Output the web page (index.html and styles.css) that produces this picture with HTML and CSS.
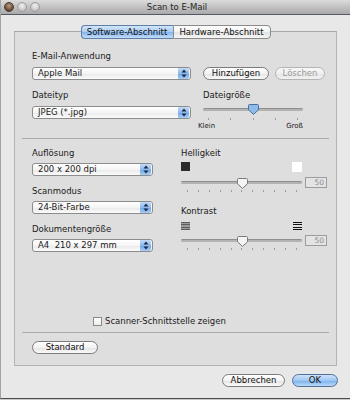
FILE: index.html
```html
<!DOCTYPE html>
<html lang="de">
<head>
    <meta charset="UTF-8">
    <meta name="viewport" content="width=device-width, initial-scale=1.0">
    <title>Scan to E-Mail</title>
    <link rel="stylesheet" href="styles.css">
</head>
<body>
    <div class="window">
        <div class="titlebar">
            <div class="lights">
                <span class="light close"></span>
                <span class="light"></span>
                <span class="light"></span>
            </div>
            <div class="title">Scan to E-Mail</div>
        </div>

        <div class="content">
            <div class="tabs">
                <span class="tab active">Software-Abschnitt</span>
                <span class="tab">Hardware-Abschnitt</span>
            </div>

            <div class="group">
                <!-- application and file type -->
                <div class="section top">
                    <div class="col col-app">
                        <div class="label">E-Mail-Anwendung</div>
                        <div class="popup">Apple Mail<span class="arrows"><svg width="6" height="9" viewBox="0 0 6 9"><path d="M3 0.5L5.5 3.5H0.5Z M3 8.5L5.5 5.5H0.5Z" fill="#1c2a40"/></svg></span></div>
                        <div class="label gap">Dateityp</div>
                        <div class="popup">JPEG (*.jpg)<span class="arrows"><svg width="6" height="9" viewBox="0 0 6 9"><path d="M3 0.5L5.5 3.5H0.5Z M3 8.5L5.5 5.5H0.5Z" fill="#1c2a40"/></svg></span></div>
                    </div>
                    <div class="col col-size">
                        <div class="btn-row">
                            <button class="btn add">Hinzufügen</button>
                            <button class="btn del" disabled>Löschen</button>
                        </div>
                        <div class="label gap">Dateigröße</div>
                        <div class="slider size">
                            <div class="track"></div>
                            <svg class="thumb" style="left: 45px" width="11" height="11" viewBox="0 0 11 11"><path d="M1.5 0.5h8a1 1 0 0 1 1 1v4.3l-5 4.6l-5-4.6v-4.3a1 1 0 0 1 1-1z" fill="#8fbbec" stroke="#4a6f9c"/></svg>
                        </div>
                        <div class="ticks five"><i></i><i></i><i></i><i></i><i></i></div>
                        <div class="scale"><span>Klein</span><span>Groß</span></div>
                    </div>
                </div>

                <div class="sep"></div>

                <!-- scan settings -->
                <div class="section middle">
                    <div class="col col-scan">
                        <div class="label">Auflösung</div>
                        <div class="popup">200 x 200 dpi<span class="arrows"><svg width="6" height="9" viewBox="0 0 6 9"><path d="M3 0.5L5.5 3.5H0.5Z M3 8.5L5.5 5.5H0.5Z" fill="#1c2a40"/></svg></span></div>
                        <div class="label gap">Scanmodus</div>
                        <div class="popup">24-Bit-Farbe<span class="arrows"><svg width="6" height="9" viewBox="0 0 6 9"><path d="M3 0.5L5.5 3.5H0.5Z M3 8.5L5.5 5.5H0.5Z" fill="#1c2a40"/></svg></span></div>
                        <div class="label gap">Dokumentengröße</div>
                        <div class="popup">A4&nbsp; 210 x 297 mm<span class="arrows"><svg width="6" height="9" viewBox="0 0 6 9"><path d="M3 0.5L5.5 3.5H0.5Z M3 8.5L5.5 5.5H0.5Z" fill="#1c2a40"/></svg></span></div>
                    </div>
                    <div class="col col-adjust">
                        <div class="label">Helligkeit</div>
                        <div class="icons">
                            <span class="sq dark"></span>
                            <span class="sq light-sq"></span>
                        </div>
                        <div class="slider-row">
                            <div class="slider wide">
                                <div class="track"></div>
                                <svg class="thumb" style="left: 56px" width="11" height="11" viewBox="0 0 11 11"><path d="M1.5 0.5h8a1 1 0 0 1 1 1v4.3l-5 4.6l-5-4.6v-4.3a1 1 0 0 1 1-1z" fill="#f4f4f4" stroke="#7a7a7a"/></svg>
                            </div>
                            <div class="value">50</div>
                        </div>
                        <div class="ticks eleven"><i></i><i></i><i></i><i></i><i></i><i></i><i></i><i></i><i></i><i></i><i></i></div>

                        <div class="label contrast">Kontrast</div>
                        <div class="icons">
                            <span class="stripes soft"><i></i><i></i><i></i><i></i></span>
                            <span class="stripes hard"><i></i><i></i><i></i><i></i></span>
                        </div>
                        <div class="slider-row">
                            <div class="slider wide">
                                <div class="track"></div>
                                <svg class="thumb" style="left: 56px" width="11" height="11" viewBox="0 0 11 11"><path d="M1.5 0.5h8a1 1 0 0 1 1 1v4.3l-5 4.6l-5-4.6v-4.3a1 1 0 0 1 1-1z" fill="#f4f4f4" stroke="#7a7a7a"/></svg>
                            </div>
                            <div class="value">50</div>
                        </div>
                        <div class="ticks eleven"><i></i><i></i><i></i><i></i><i></i><i></i><i></i><i></i><i></i><i></i><i></i></div>
                    </div>
                </div>

                <label class="check">
                    <span class="box"></span>
                    Scanner-Schnittstelle zeigen
                </label>

                <div class="sep bottom"></div>

                <button class="btn standard">Standard</button>
            </div>

            <div class="actions">
                <button class="btn cancel">Abbrechen</button>
                <button class="btn ok">OK</button>
            </div>
        </div>
    </div>
</body>
</html>
```

FILE: styles.css
```css
body {
    margin: 0;
    font-family: "DejaVu Sans", "Noto Sans", sans-serif;
    font-size: 8.5px;
    color: #1a1a1a;
    background: #c9c9c9;
}
.window {
    width: 350px;
    height: 399px;
    box-sizing: border-box;
    background: #e8e8e8;
    border-left: 1px solid #a4a4a4;
    border-bottom: 1px solid #4c4c4c;
}

/* title bar */
.titlebar {
    height: 14px;
    border-bottom: 1px solid #535a66;
    background: linear-gradient(#dcdcdc, #c4c4c4 45%, #a9a9a9);
    display: flex;
    align-items: center;
}
.lights {
    display: flex;
    gap: 3px;
    margin-left: 3px;
    width: 60px;
}
.light {
    width: 10px;
    height: 10px;
    border-radius: 50%;
    box-sizing: border-box;
    border: 1px solid #9d9d9d;
    background: radial-gradient(circle at 50% 35%, #f2f2f2, #c4c4c4 70%);
}
.light.close {
    border-color: #4a3a30;
    background: radial-gradient(circle at 50% 35%, #b99a80, #6a4c38 65%, #4a3426);
}
.title {
    flex: 1;
    margin-left: -60px;
    margin-right: 0;
    text-align: center;
    font-size: 8.5px;
    color: #262626;
}

.content {
    padding: 10px 13px 0 13px;
}

/* segmented tabs */
.tabs {
    display: flex;
    justify-content: center;
    position: relative;
    z-index: 1;
}
.tab {
    height: 12px;
    line-height: 12px;
    border: 1px solid #8a8a8a;
    background: linear-gradient(#ffffff, #f1f1f1 50%, #e2e2e2 51%, #f6f6f6);
    color: #111;
    padding: 0 5px;
}
.tab.active {
    width: 81px;
    text-align: center;
    border-radius: 4px 0 0 4px;
    border-right: none;
    border-color: #5f7ea8;
    background: linear-gradient(#d3e5fa, #a8ccf3 50%, #83b4ee 51%, #c2dcf8);
}
.tab:last-child {
    width: 86px;
    text-align: center;
    border-radius: 0 4px 4px 0;
}

/* group box */
.group {
    margin-top: -8px;
    height: 335px;
    box-sizing: border-box;
    border: 1px solid #b4b4b4;
    border-top-color: #a8a8a8;
    background: #dedede;
    padding-top: 18px;
    display: flex;
    flex-direction: column;
}
.section {
    display: flex;
    margin-left: 17px;
}
.col {
    display: flex;
    flex-direction: column;
}
.col-app {
    width: 159px;
}
.col-size {
    width: 122px;
    margin-left: 12px;
}
.col-scan {
    width: 121px;
}
.col-adjust {
    width: 146px;
    margin-left: 28px;
}

.label {
    height: 12px;
    line-height: 12px;
    white-space: nowrap;
}
.col-app .label.gap {
    margin-top: 9px;
}
.col-scan .label.gap {
    margin-top: 9px;
}
.col-size .label.gap {
    margin-top: 9px;
}

/* popup menus */
.popup {
    position: relative;
    height: 13px;
    line-height: 11px;
    box-sizing: border-box;
    border: 1px solid #8c8c8c;
    border-radius: 3px;
    background: linear-gradient(#ffffff, #f5f5f5 50%, #e9e9e9 51%, #fbfbfb);
    padding-left: 5px;
    margin-top: 5px;
    white-space: nowrap;
}
.col-scan .popup {
    margin-top: 4px;
}
.arrows {
    position: absolute;
    right: 1px;
    top: 0;
    width: 11px;
    height: 11px;
    border-radius: 0 2px 2px 0;
    background: linear-gradient(#c3dbf7, #8cb9ee 50%, #6ea5e8 51%, #a9cdf5);
    display: flex;
    align-items: center;
    justify-content: center;
}

/* push buttons */
.btn {
    height: 13px;
    box-sizing: border-box;
    padding: 0;
    border: 1px solid #7b7b7b;
    border-radius: 7px;
    background: linear-gradient(#ffffff, #f3f3f3 50%, #e3e3e3 51%, #fafafa);
    font-family: "DejaVu Sans", "Noto Sans", sans-serif;
    font-size: 8.5px;
    line-height: 11px;
    color: #111;
}
.btn-row {
    display: flex;
    gap: 6px;
    margin-top: 17px;
}
.btn.add {
    width: 66px;
}
.btn.del {
    width: 50px;
    color: #9a9a9a;
    border-color: #b4b4b4;
    background: linear-gradient(#f8f8f8, #eeeeee 50%, #e4e4e4 51%, #f2f2f2);
}

/* sliders */
.slider {
    position: relative;
    height: 11px;
}
.slider.size {
    width: 100px;
    margin-top: 3px;
}
.slider.wide {
    width: 121px;
}
.track {
    margin-top: 4px;
    height: 3px;
    box-sizing: border-box;
    border-radius: 2px;
    background: #b3b3b3;
    border-top: 1px solid #8f8f8f;
}
.thumb {
    position: absolute;
    top: 0;
}
.slider.wide .thumb {
    top: 1px;
}
.ticks {
    display: flex;
    justify-content: space-between;
    height: 3px;
    box-sizing: border-box;
}
.ticks i {
    width: 1px;
    height: 2px;
    background: #9c9c9c;
}
.ticks.five {
    width: 100px;
    padding: 0 5px;
    margin-top: 3px;
}
.ticks.eleven {
    width: 121px;
    padding: 0 5px 0 6px;
    margin-top: 2px;
}
.scale {
    display: flex;
    justify-content: space-between;
    width: 105px;
    margin-left: -5px;
    margin-top: 1px;
    font-size: 7px;
    line-height: 8px;
}

.sep {
    height: 1px;
    background: #ababab;
    margin: 8px 7px 0 7px;
}

.section.middle {
    margin-top: 8px;
}
.icons {
    display: flex;
    justify-content: space-between;
    width: 121px;
    height: 10px;
    margin-top: 3px;
    align-items: flex-end;
}
.sq {
    width: 9px;
    height: 9px;
    margin-bottom: 1px;
}
.sq.dark {
    background: #2b2b2d;
}
.sq.light-sq {
    width: 10px;
    height: 10px;
    margin-bottom: 0;
    background: #ffffff;
}
.stripes {
    display: flex;
    flex-direction: column;
    justify-content: space-between;
    width: 9px;
    height: 8px;
}
.stripes i {
    height: 1px;
}
.stripes.soft {
    background: #9a9a9a;
}
.stripes.soft i {
    background: #5e5e5e;
}
.stripes.hard i {
    height: 1.2px;
    background: #111;
}
.slider-row {
    display: flex;
    gap: 3px;
    margin-top: 5px;
}
.value {
    width: 22px;
    height: 11px;
    box-sizing: border-box;
    border: 1px solid #9c9c9c;
    background: #e4e4e4;
    color: #8a8a8a;
    font-size: 7.5px;
    line-height: 9px;
    text-align: right;
    padding-right: 2px;
}
.label.contrast {
    margin-top: 12px;
}

/* checkbox and bottom of group */
.check {
    margin-top: auto;
    margin-left: 78px;
    display: flex;
    align-items: center;
    gap: 3px;
    height: 12px;
}
.box {
    width: 9px;
    height: 9px;
    box-sizing: border-box;
    border: 1px solid #8a8a8a;
    background: linear-gradient(#ffffff, #ececec);
}
.sep.bottom {
    margin-top: 5px;
}
.btn.standard {
    width: 66px;
    margin: 8px 0 11px 17px;
}

/* dialog buttons */
.actions {
    display: flex;
    justify-content: flex-end;
    gap: 7px;
    margin-top: 8px;
    margin-right: -1px;
}
.btn.cancel {
    width: 63px;
}
.btn.ok {
    width: 46px;
    border-color: #50709c;
    background: linear-gradient(#cfe3fa, #9fc6f2 50%, #78aeec 51%, #bcdaf8);
}
```
